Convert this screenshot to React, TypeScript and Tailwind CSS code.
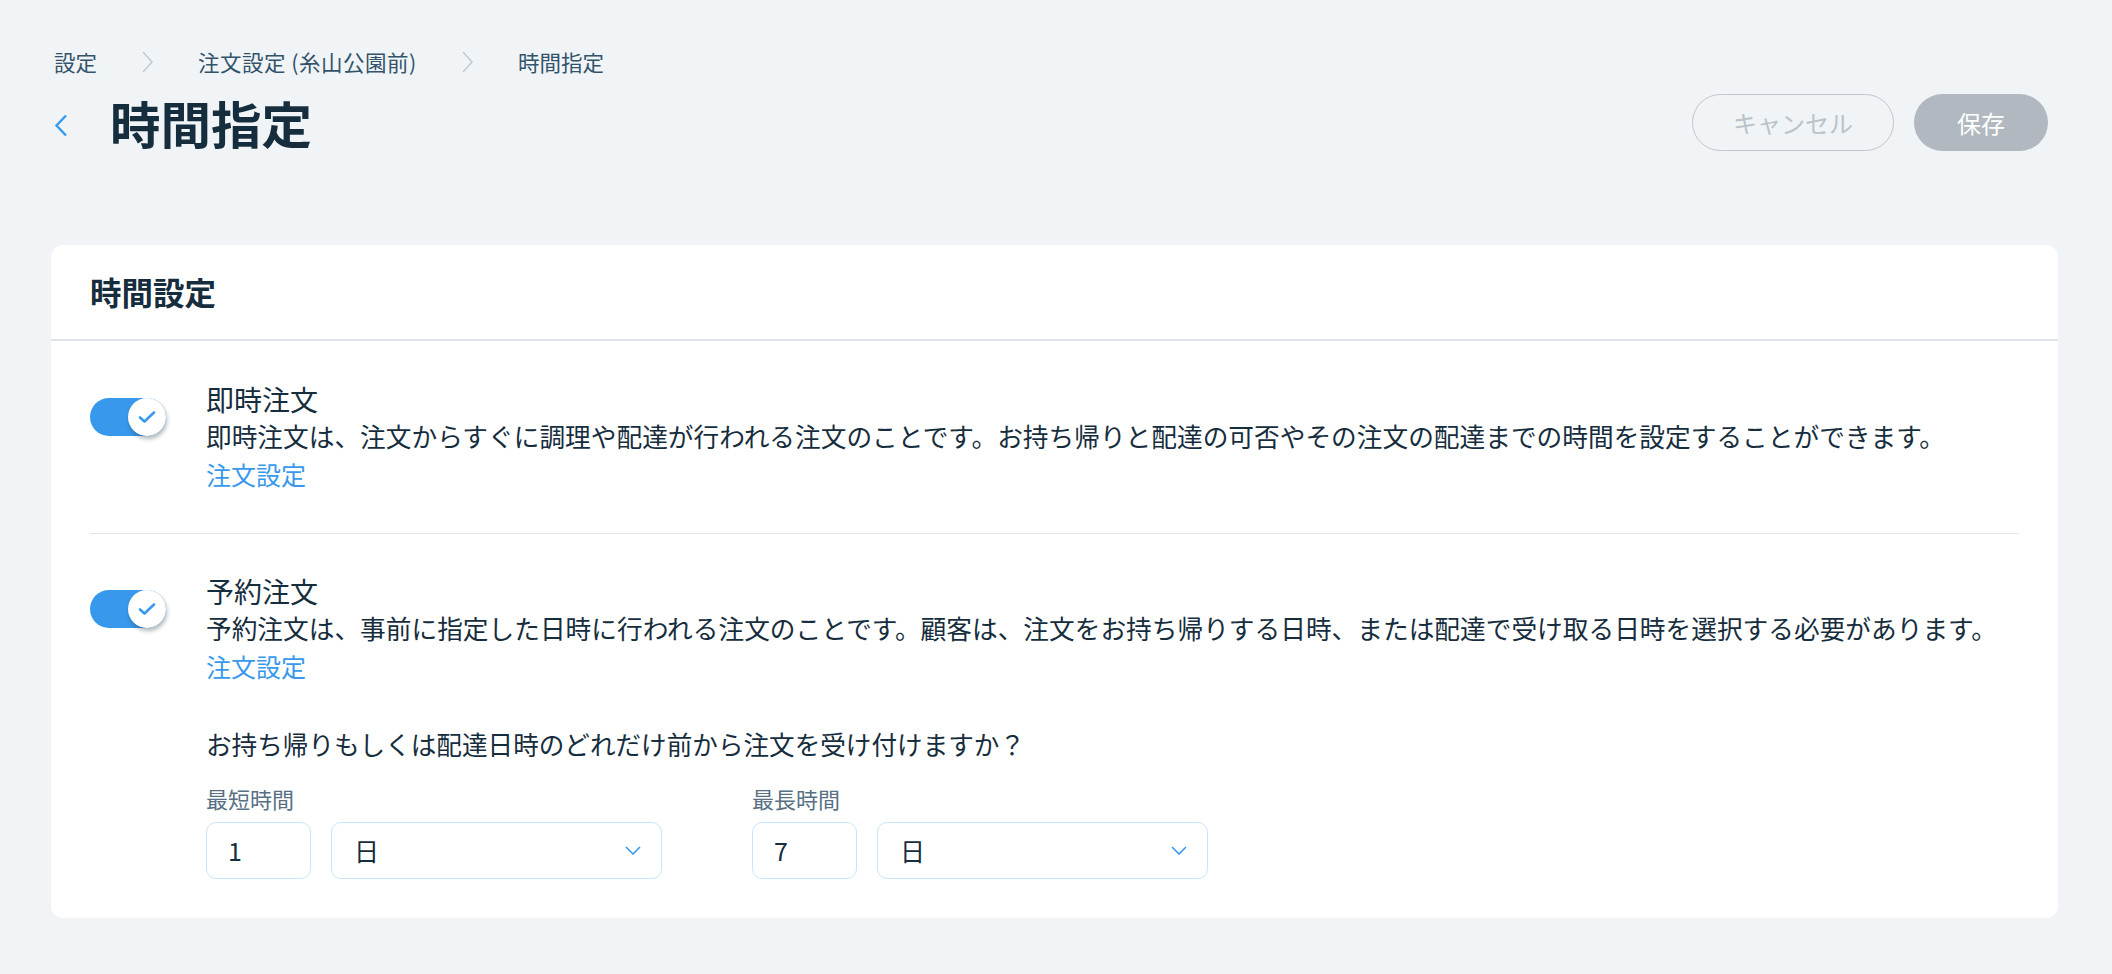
const font = "font-['Noto_Sans_CJK_JP','Noto_Sans',sans-serif]";

function Toggle() {
  return (
    <div className="relative mt-[17px] h-[38px] w-[76px] shrink-0 rounded-full bg-[#3899ec]">
      <div className="absolute right-0 top-0 grid h-[38px] w-[38px] place-items-center rounded-full bg-white shadow-[1px_3px_4px_rgba(22,45,61,0.35)]">
        <svg width="18" height="14" viewBox="0 0 18 14" fill="none">
          <path d="M2 7.5 L6.5 11.5 L16 2.5" stroke="#3899ec" strokeWidth="2.6" strokeLinecap="round" strokeLinejoin="round" />
        </svg>
      </div>
    </div>
  );
}

function Chevron() {
  return (
    <svg width="16" height="9" viewBox="0 0 16 9" fill="none">
      <path d="M1 1 L8 8 L15 1" stroke="#3899ec" strokeWidth="1.6" />
    </svg>
  );
}

function DurationField({ label, value }: { label: string; value: string }) {
  return (
    <div>
      <p className="text-[22px] leading-[30px] text-[#577083]">{label}</p>
      <div className="mt-[9px] flex gap-[20px]">
        <div className="flex h-[57px] w-[105px] items-center rounded-[10px] border border-[#c7e6fd] pl-[21px] text-[25px] text-[#162d3d]">
          {value}
        </div>
        <div className="flex h-[57px] w-[331px] items-center justify-between rounded-[10px] border border-[#c7e6fd] pl-[22px] pr-[20px] text-[25px] text-[#162d3d]">
          <span>日</span>
          <Chevron />
        </div>
      </div>
    </div>
  );
}

function OrderRow({ title, desc, children }: { title: string; desc: string; children?: React.ReactNode }) {
  return (
    <div className="flex gap-[40px]">
      <Toggle />
      <div>
        <p className="text-[28px] leading-[36px] text-[#162d3d]">{title}</p>
        <p className="text-[25.7px] leading-[38px] text-[#162d3d]">{desc}</p>
        <a className="block text-[25px] leading-[38px] text-[#3899ec]">注文設定</a>
        {children}
      </div>
    </div>
  );
}

export default function App() {
  return (
    <div className={`${font} min-h-screen bg-[#f0f4f7] pb-[55px] pl-[51px] pr-[54px] pt-[48px]`}>
      <nav className="ml-[3px] flex items-center text-[21.5px] leading-[28px] text-[#32536a]">
        <span>設定</span>
        <svg className="mx-[45px]" width="11" height="22" viewBox="0 0 11 22" fill="none">
          <path d="M1 1 L10 11 L1 21" stroke="#c1c9d1" strokeWidth="1.5" />
        </svg>
        <span className="tracking-[0.5px]">注文設定 (糸山公園前)</span>
        <svg className="mx-[45px]" width="11" height="22" viewBox="0 0 11 22" fill="none">
          <path d="M1 1 L10 11 L1 21" stroke="#c1c9d1" strokeWidth="1.5" />
        </svg>
        <span>時間指定</span>
      </nav>

      <div className="mt-[18px] flex h-[57px] items-center justify-between">
        <div className="flex items-center">
          <svg className="ml-[3px] mt-[6px]" width="14" height="23" viewBox="0 0 14 23" fill="none">
            <path d="M12 1.5 L2.5 11.5 L12 21.5" stroke="#3899ec" strokeWidth="2.4" />
          </svg>
          <h1 className="ml-[42px] text-[50.5px] font-bold leading-[57px] text-[#162d3d]">時間指定</h1>
        </div>
        <div className="mr-[10px] flex gap-[20px]">
          <button className="h-[57px] w-[202px] rounded-full border border-[#c1c7cd] text-[24px] text-[#bac2ca]">
            キャンセル
          </button>
          <button className="h-[57px] w-[134px] rounded-full bg-[#b1b8bf] text-[24px] text-white">保存</button>
        </div>
      </div>

      <section className="mt-[94px] rounded-[12px] bg-white">
        <header className="flex h-[96px] items-center border-b-2 border-[#dfe5eb] px-[39px]">
          <h2 className="text-[31.5px] font-bold text-[#162d3d]">時間設定</h2>
        </header>
        <div className="px-[39px] pb-[39px]">
          <div className="border-b border-[#e3e7ec] pb-[40px] pt-[40px]">
            <OrderRow
              title="即時注文"
              desc="即時注文は、注文からすぐに調理や配達が行われる注文のことです。お持ち帰りと配達の可否やその注文の配達までの時間を設定することができます。"
            />
          </div>
          <div className="pt-[39px]">
            <OrderRow
              title="予約注文"
              desc="予約注文は、事前に指定した日時に行われる注文のことです。顧客は、注文をお持ち帰りする日時、または配達で受け取る日時を選択する必要があります。"
            >
              <p className="mt-[40px] text-[25.6px] leading-[38px] text-[#162d3d]">
                お持ち帰りもしくは配達日時のどれだけ前から注文を受け付けますか？
              </p>
              <div className="mt-[20px] flex gap-[90px]">
                <DurationField label="最短時間" value="1" />
                <DurationField label="最長時間" value="7" />
              </div>
            </OrderRow>
          </div>
        </div>
      </section>
    </div>
  );
}
